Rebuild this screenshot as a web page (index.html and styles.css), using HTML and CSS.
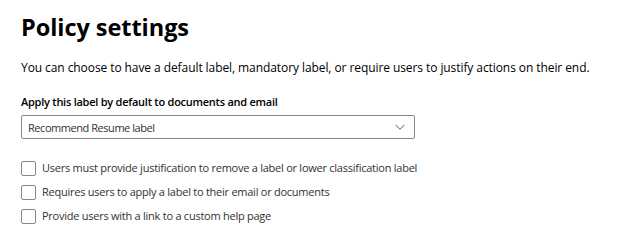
FILE: index.html
```html
<!DOCTYPE html>
<html>
<head>
<meta charset="utf-8">
<link rel="stylesheet" href="styles.css">
</head>
<body>
<div class="page">
  <h1 class="title">Policy settings</h1>
  <p class="desc">You can choose to have a default label, mandatory label, or require users to justify actions on their end.</p>
  <div class="field">
    <label class="field-label">Apply this label by default to documents and email</label>
    <div class="select">
      <span class="select-value">Recommend Resume label</span>
      <svg class="chevron" width="10" height="6" viewBox="0 0 10 6"><path d="M0.5 0.75 L5 5.25 L9.5 0.75" fill="none" stroke="#605e5c" stroke-width="1"/></svg>
    </div>
  </div>
  <div class="checks">
    <label class="check"><span class="box"></span><span>Users must provide justification to remove a label or lower classification label</span></label>
    <label class="check"><span class="box"></span><span>Requires users to apply a label to their email or documents</span></label>
    <label class="check"><span class="box"></span><span>Provide users with a link to a custom help page</span></label>
  </div>
</div>
</body>
</html>
```
FILE: styles.css
```css
html, body { margin: 0; padding: 0; background: #fff; }
body { font-family: "Open Sans", "Noto Sans", sans-serif; color: #201f1e; }
.page { padding: 11px 0 0 21px; }
.title { margin: 0; font-size: 23.5px; font-weight: 700; line-height: 32px; color: #000; letter-spacing: -0.05px; }
.desc { margin: 17px 0 0; font-size: 12px; line-height: 16px; color: #000; letter-spacing: -0.08px; }
.field { margin-top: 18px; display: flex; flex-direction: column; }
.field-label { font-size: 11px; font-weight: 600; line-height: 16px; color: #000; letter-spacing: -0.25px; }
.select { margin-top: 5px; width: 394px; height: 24px; box-sizing: border-box; border: 1px solid #8a8886; border-radius: 2px; display: flex; align-items: center; justify-content: space-between; padding: 0 9px 0 6px; }
.select-value { font-size: 11px; color: #323130; letter-spacing: -0.45px; }
.chevron { display: block; }
.checks { margin-top: 21px; display: flex; flex-direction: column; gap: 8px; }
.check { display: flex; align-items: center; gap: 6px; font-size: 11px; line-height: 16px; color: #323130; letter-spacing: -0.25px; }
.box { width: 15px; height: 15px; box-sizing: border-box; border: 1px solid #8a8886; border-radius: 2px; flex: none; }
```
